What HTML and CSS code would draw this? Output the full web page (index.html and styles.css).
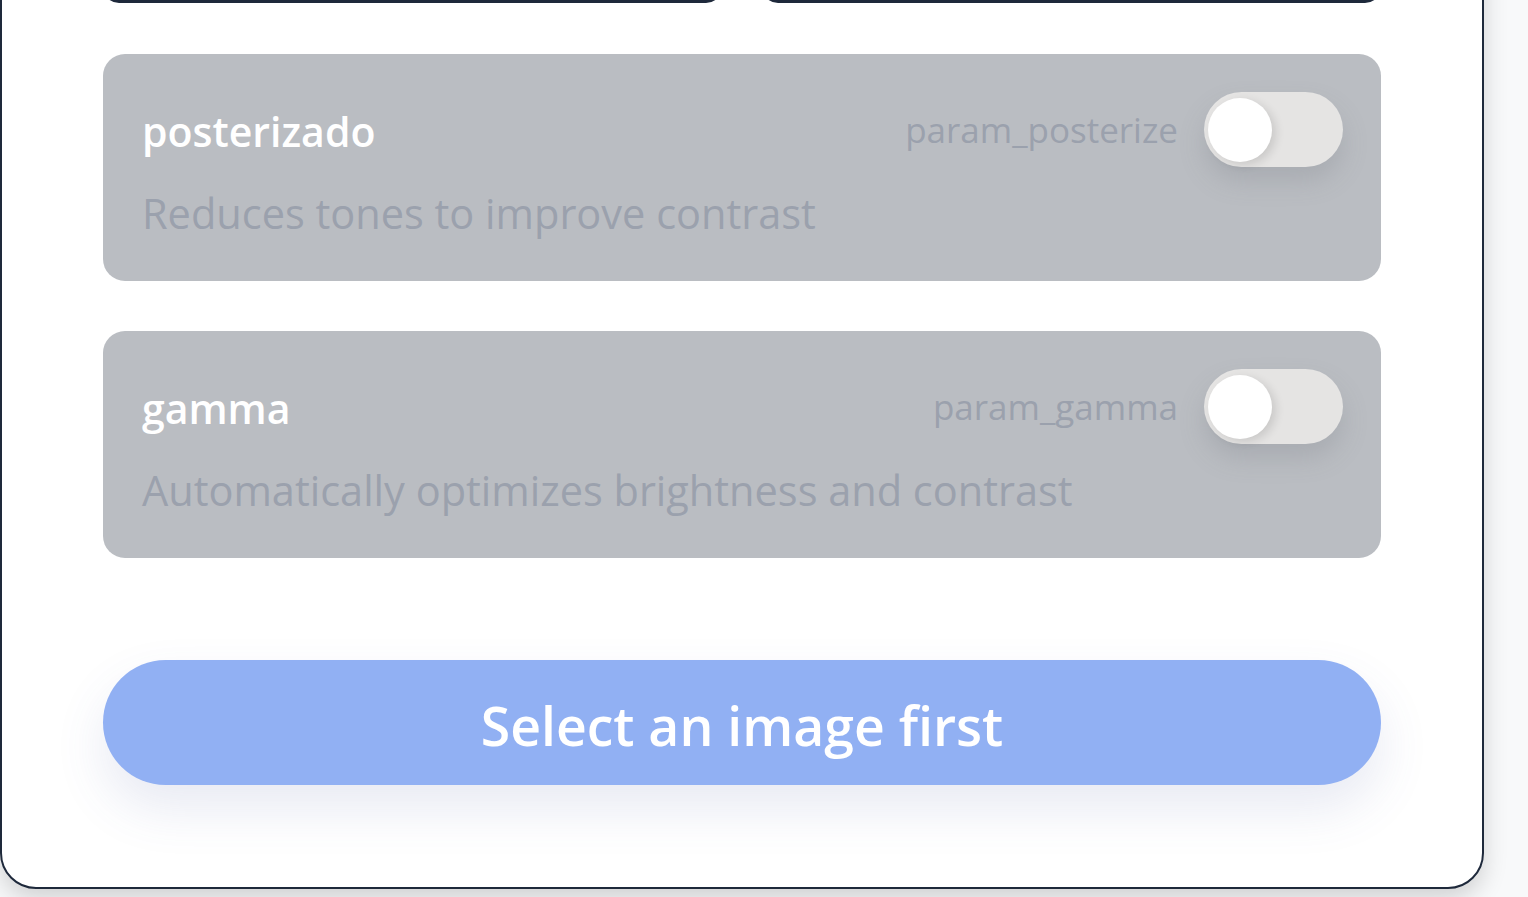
FILE: index.html
```html
<!DOCTYPE html>
<html lang="en">
<head>
<meta charset="utf-8">
<title>Filters</title>
<link rel="stylesheet" href="styles.css">
</head>
<body>
<main class="panel">
  <div class="top-row">
    <button class="top-btn" type="button"></button>
    <button class="top-btn" type="button"></button>
  </div>

  <section class="card">
    <div class="card-head">
      <h3 class="card-title">posterizado</h3>
      <div class="card-side">
        <span class="param">param_posterize</span>
        <span class="toggle"><span class="knob"></span></span>
      </div>
    </div>
    <p class="card-desc">Reduces tones to improve contrast</p>
  </section>

  <section class="card">
    <div class="card-head">
      <h3 class="card-title">gamma</h3>
      <div class="card-side">
        <span class="param">param_gamma</span>
        <span class="toggle"><span class="knob"></span></span>
      </div>
    </div>
    <p class="card-desc">Automatically optimizes brightness and contrast</p>
  </section>

  <button class="submit" type="button">Select an image first</button>
</main>
</body>
</html>
```
FILE: styles.css
```css
* { box-sizing: border-box; }

html, body {
  margin: 0;
  padding: 0;
  background: #f8f9fa;
  font-family: "Open Sans", "Noto Sans", sans-serif;
  overflow: hidden;
}

body { min-height: 897px; }

.panel {
  width: 1484px;
  margin-top: -99px;
  background: #ffffff;
  border: 2px solid #1e293b;
  border-radius: 0 0 36px 36px;
  padding: 0 101px 102px 101px;
  display: flex;
  flex-direction: column;
  box-shadow: 0 10px 24px rgba(0, 0, 0, 0.16);
}

.top-row {
  display: grid;
  grid-template-columns: 1fr 1fr;
  gap: 40px;
  height: 100px;
  margin-bottom: 51px;
}

.top-btn {
  border: 3px solid #1e293b;
  border-radius: 16px;
  background: #ffffff;
  height: 100%;
}

.card {
  background: #babdc2;
  border-radius: 22px;
  padding: 38px 38px 0 39px;
  height: 227px;
  margin-bottom: 50px;
}

.card + .card { margin-bottom: 102px; }

.card-head {
  display: flex;
  align-items: center;
  justify-content: space-between;
  height: 75px;
}

.card-title {
  margin: 0;
  color: #ffffff;
  font-size: 41px;
  font-weight: 600;
  line-height: 1;
  padding-top: 4px;
}

.card-side {
  display: flex;
  align-items: center;
  gap: 26px;
}

.param {
  color: #9ba1ad;
  font-size: 35px;
  line-height: 1;
}

.toggle {
  position: relative;
  display: block;
  width: 139px;
  height: 75px;
  border-radius: 38px;
  background: #e5e4e3;
  box-shadow: 0 14px 24px rgba(120, 124, 132, 0.25);
}

.knob {
  position: absolute;
  left: 4px;
  top: 6px;
  width: 64px;
  height: 64px;
  border-radius: 50%;
  background: #ffffff;
  box-shadow: 4px 3px 10px rgba(0, 0, 0, 0.12);
}

.card-desc {
  margin: 16px 0 0 0;
  color: #9ba1ad;
  font-size: 41.5px;
  line-height: 60px;
}

.submit {
  height: 125px;
  border: none;
  border-radius: 63px;
  background: #91b0f3;
  color: #ffffff;
  font-family: inherit;
  font-size: 53.5px;
  font-weight: 600;
  box-shadow: 0 24px 50px rgba(80, 96, 160, 0.13);
  padding: 6px 0 0 0;
}
```
